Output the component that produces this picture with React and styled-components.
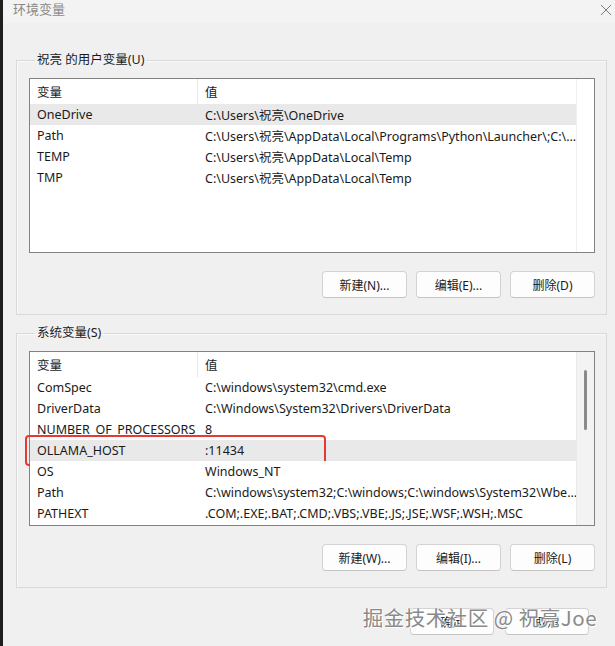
import React from "react";
import styled, { createGlobalStyle } from "styled-components";

const GlobalStyle = createGlobalStyle`
  html, body {
    margin: 0;
    padding: 0;
    background: #f0f0f0;
  }
  body {
    font-family: "Noto Sans", "Noto Sans CJK SC", sans-serif;
    font-size: 12.5px;
    color: #1a1a1a;
  }
`;

const Page = styled.div`
  display: flex;
  width: 615px;
  height: 646px;
  overflow: hidden;
  position: relative;
`;

const LeftEdge = styled.div`
  width: 3px;
  flex: none;
  background: #1f1f1f;
`;

const Window = styled.div`
  flex: 1;
  display: flex;
  flex-direction: column;
  background: #f0f0f0;
`;

const TitleBar = styled.div`
  height: 23px;
  display: flex;
  align-items: flex-start;
  justify-content: space-between;
  padding: 0 3px 0 10px;
  background: #f3f3f3;
`;

const Title = styled.span`
  font-family: "Noto Sans CJK SC", sans-serif;
  font-size: 13px;
  line-height: 17px;
  color: #8a8a8a;
`;

const CloseIcon = styled.svg`
  margin-top: 4px;
  width: 12px;
  height: 12px;
`;

const Content = styled.div`
  display: flex;
  flex-direction: column;
  padding: 29px 8px 0 13px;
  gap: 10px;
`;

const Group = styled.fieldset`
  margin: 0;
  padding: 10px 11px 16px 12px;
  border: 1px solid #d9d9d9;
  box-shadow: inset 1px 1px 0 #fafafa;
  display: flex;
  flex-direction: column;
  gap: 18px;
  min-width: 0;
`;

const Legend = styled.legend`
  display: block;
  height: 16px;
  padding: 0 2px;
  margin-left: 6px;
  line-height: 16px;
  font-size: 12.5px;
  color: #1a1a1a;
`;

const List = styled.div`
  height: 175px;
  border: 1px solid #828282;
  background: #fff;
  display: flex;
  box-sizing: border-box;
`;

const ListBody = styled.div`
  flex: 1;
  min-width: 0;
  display: flex;
  flex-direction: column;
`;

const Gutter = styled.div`
  width: 17px;
  flex: none;
  background: ${(p) => (p.$scroll ? "#f3f3f3" : "#fff")};
  border-left: 1px solid ${(p) => (p.$scroll ? "#eaeaea" : "#f0f0f0")};
  display: flex;
  justify-content: center;
  padding-top: 18px;
`;

const Thumb = styled.div`
  width: 3px;
  height: 60px;
  border-radius: 2px;
  background: #8a8a8a;
`;

const Row = styled.div`
  display: grid;
  grid-template-columns: 168px 1fr;
  height: ${(p) => (p.$header ? "25px" : "21px")};
  align-items: center;
  background: ${(p) => (p.$selected ? "#e9e9e9" : "#fff")};
  position: relative;
`;

const Cell = styled.div`
  padding-left: 7px;
  height: 100%;
  display: flex;
  align-items: center;
  white-space: nowrap;
  overflow: hidden;
  border-right: ${(p) => (p.$header ? "1px solid #e6e6e6" : "none")};
  font-family: ${(p) =>
    p.$cjk ? '"Noto Sans CJK SC", sans-serif' : "inherit"};
`;

const Highlight = styled.div`
  position: absolute;
  left: -5px;
  top: -5px;
  width: 301px;
  height: 31px;
  box-sizing: border-box;
  border: 2px solid #e53935;
  border-radius: 4px;
  pointer-events: none;
`;

const ButtonRow = styled.div`
  display: flex;
  justify-content: flex-end;
  gap: ${(p) => p.$gap || "10px"};
  padding-right: ${(p) => p.$pr || "0"};
`;

const Button = styled.button`
  width: ${(p) => p.$w || "85px"};
  height: 27px;
  border: 1px solid #d3d3d3;
  border-bottom-color: #c4c4c4;
  border-radius: 4px;
  background: #fdfdfd;
  font-family: "Noto Sans", "Noto Sans CJK SC", sans-serif;
  font-size: 12px;
  color: #1a1a1a;
  padding: 0;
`;

const Footer = styled.div`
  margin-top: 10px;
  position: relative;
`;

const Watermark = styled.div`
  position: absolute;
  right: 10px;
  top: -6px;
  font-family: "Noto Sans CJK SC", "Noto Sans", sans-serif;
  font-size: 20.5px;
  letter-spacing: 0.5px;
  color: #8a8a8a;
  white-space: nowrap;
  text-shadow: 0 0 2px #fff, 0 0 2px #fff, 1px 1px 0 #fff;
  pointer-events: none;
`;

const userVars = [
  ["OneDrive", "C:\\Users\\祝亮\\OneDrive"],
  ["Path", "C:\\Users\\祝亮\\AppData\\Local\\Programs\\Python\\Launcher\\;C:\\..."],
  ["TEMP", "C:\\Users\\祝亮\\AppData\\Local\\Temp"],
  ["TMP", "C:\\Users\\祝亮\\AppData\\Local\\Temp"],
];

const systemVars = [
  ["ComSpec", "C:\\windows\\system32\\cmd.exe"],
  ["DriverData", "C:\\Windows\\System32\\Drivers\\DriverData"],
  ["NUMBER_OF_PROCESSORS", "8"],
  ["OLLAMA_HOST", ":11434"],
  ["OS", "Windows_NT"],
  ["Path", "C:\\windows\\system32;C:\\windows;C:\\windows\\System32\\Wbe..."],
  ["PATHEXT", ".COM;.EXE;.BAT;.CMD;.VBS;.VBE;.JS;.JSE;.WSF;.WSH;.MSC"],
];

const VarList = ({ rows, selected, marked, scroll }) => (
  <List>
    <ListBody>
      <Row $header>
        <Cell $header $cjk>变量</Cell>
        <Cell $cjk>值</Cell>
      </Row>
      {rows.map(([name, value]) => (
        <Row key={name + value} $selected={name === selected}>
          {name === marked && <Highlight />}
          <Cell>{name}</Cell>
          <Cell>{value}</Cell>
        </Row>
      ))}
    </ListBody>
    <Gutter $scroll={scroll}>{scroll && <Thumb />}</Gutter>
  </List>
);

export default function App() {
  return (
    <>
      <GlobalStyle />
      <Page>
        <LeftEdge />
        <Window>
          <TitleBar>
            <Title>环境变量</Title>
            <CloseIcon viewBox="0 0 12 12">
              <path d="M1 1L11 11M11 1L1 11" stroke="#7c7c7c" strokeWidth="1" fill="none" />
            </CloseIcon>
          </TitleBar>
          <Content>
            <Group>
              <Legend>祝亮 的用户变量(U)</Legend>
              <VarList rows={userVars} selected="OneDrive" />
              <ButtonRow $gap="9px">
                <Button>新建(N)...</Button>
                <Button>编辑(E)...</Button>
                <Button>删除(D)</Button>
              </ButtonRow>
            </Group>
            <Group>
              <Legend>系统变量(S)</Legend>
              <VarList
                rows={systemVars}
                selected="OLLAMA_HOST"
                marked="OLLAMA_HOST"
                scroll
              />
              <ButtonRow $gap="9px">
                <Button>新建(W)...</Button>
                <Button>编辑(I)...</Button>
                <Button>删除(L)</Button>
              </ButtonRow>
            </Group>
            <Footer>
              <ButtonRow $gap="11px" $pr="18px">
                <Button $w="84px">确定</Button>
                <Button $w="84px">取消</Button>
              </ButtonRow>
              <Watermark>掘金技术社区 @ 祝亮Joe</Watermark>
            </Footer>
          </Content>
        </Window>
      </Page>
    </>
  );
}
